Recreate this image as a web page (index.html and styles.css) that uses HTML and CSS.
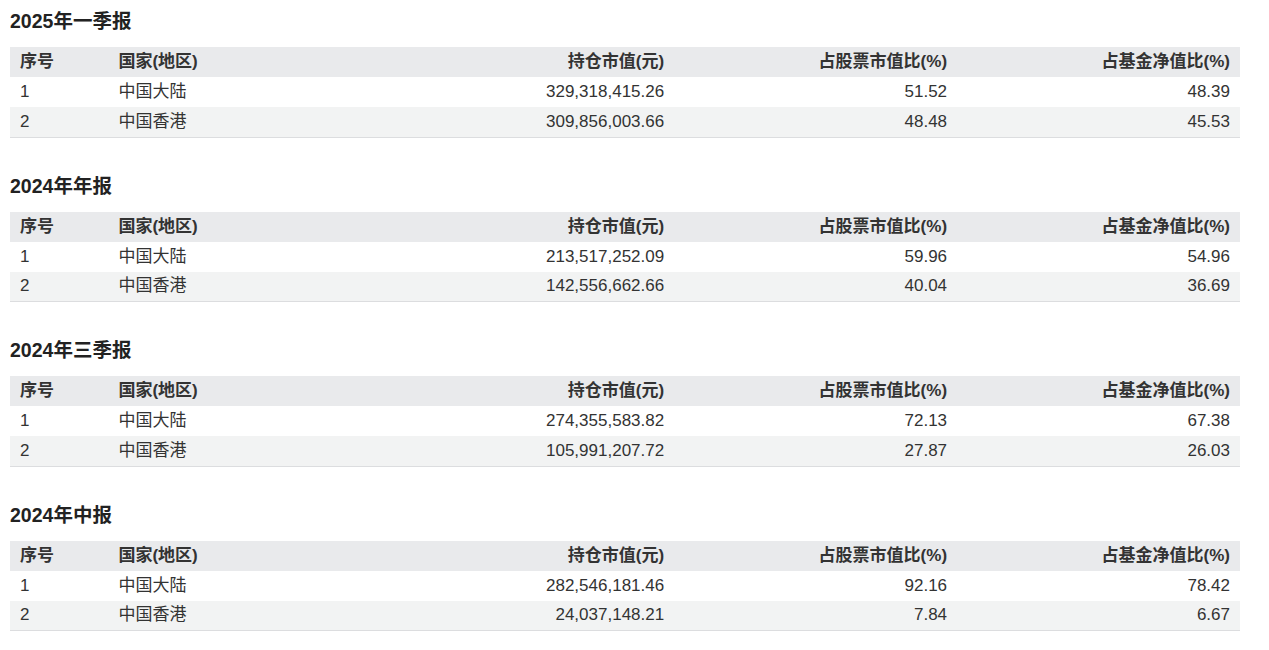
FILE: index.html
```html
<!DOCTYPE html>
<html lang="zh-CN">
<head>
<meta charset="utf-8">
<title>资产配置</title>
<link rel="stylesheet" href="styles.css">
</head>
<body>
<div class="page">
  <section class="report">
    <h3 class="report-title">2025年一季报</h3>
    <table class="grid">
      <colgroup><col class="c-idx"><col class="c-wide"><col class="c-wide"><col class="c-wide"><col class="c-wide"></colgroup>
      <thead><tr><th>序号</th><th>国家(地区)</th><th class="num">持仓市值(元)</th><th class="num">占股票市值比(%)</th><th class="num">占基金净值比(%)</th></tr></thead>
      <tbody>
        <tr><td>1</td><td>中国大陆</td><td class="num">329,318,415.26</td><td class="num">51.52</td><td class="num">48.39</td></tr>
        <tr><td>2</td><td>中国香港</td><td class="num">309,856,003.66</td><td class="num">48.48</td><td class="num">45.53</td></tr>
      </tbody>
    </table>
  </section>
  <section class="report">
    <h3 class="report-title">2024年年报</h3>
    <table class="grid">
      <colgroup><col class="c-idx"><col class="c-wide"><col class="c-wide"><col class="c-wide"><col class="c-wide"></colgroup>
      <thead><tr><th>序号</th><th>国家(地区)</th><th class="num">持仓市值(元)</th><th class="num">占股票市值比(%)</th><th class="num">占基金净值比(%)</th></tr></thead>
      <tbody>
        <tr><td>1</td><td>中国大陆</td><td class="num">213,517,252.09</td><td class="num">59.96</td><td class="num">54.96</td></tr>
        <tr><td>2</td><td>中国香港</td><td class="num">142,556,662.66</td><td class="num">40.04</td><td class="num">36.69</td></tr>
      </tbody>
    </table>
  </section>
  <section class="report">
    <h3 class="report-title">2024年三季报</h3>
    <table class="grid">
      <colgroup><col class="c-idx"><col class="c-wide"><col class="c-wide"><col class="c-wide"><col class="c-wide"></colgroup>
      <thead><tr><th>序号</th><th>国家(地区)</th><th class="num">持仓市值(元)</th><th class="num">占股票市值比(%)</th><th class="num">占基金净值比(%)</th></tr></thead>
      <tbody>
        <tr><td>1</td><td>中国大陆</td><td class="num">274,355,583.82</td><td class="num">72.13</td><td class="num">67.38</td></tr>
        <tr><td>2</td><td>中国香港</td><td class="num">105,991,207.72</td><td class="num">27.87</td><td class="num">26.03</td></tr>
      </tbody>
    </table>
  </section>
  <section class="report">
    <h3 class="report-title">2024年中报</h3>
    <table class="grid">
      <colgroup><col class="c-idx"><col class="c-wide"><col class="c-wide"><col class="c-wide"><col class="c-wide"></colgroup>
      <thead><tr><th>序号</th><th>国家(地区)</th><th class="num">持仓市值(元)</th><th class="num">占股票市值比(%)</th><th class="num">占基金净值比(%)</th></tr></thead>
      <tbody>
        <tr><td>1</td><td>中国大陆</td><td class="num">282,546,181.46</td><td class="num">92.16</td><td class="num">78.42</td></tr>
        <tr><td>2</td><td>中国香港</td><td class="num">24,037,148.21</td><td class="num">7.84</td><td class="num">6.67</td></tr>
      </tbody>
    </table>
  </section>
</div>
</body>
</html>
```

FILE: styles.css
```css
html, body {
  margin: 0;
  padding: 0;
  background: #ffffff;
}

body {
  font-family: "Liberation Sans", "Noto Sans CJK SC", sans-serif;
  color: #333333;
  font-size: 17px;
}

.page {
  width: 1230px;
  padding: 8px 0 0 10px;
}

.report {
  margin-bottom: 35px;
}

.report-title {
  margin: 0 0 12px 0;
  font-size: 19.5px;
  line-height: 27px;
  font-weight: bold;
  color: #222222;
}

.grid {
  width: 100%;
  border-collapse: collapse;
  table-layout: fixed;
  border-bottom: 1px solid #dcdddf;
}

.c-idx { width: 8%; }
.c-wide { width: 23%; }

.grid th,
.grid td {
  height: 30px;
  padding: 0 10px;
  text-align: left;
  vertical-align: middle;
  white-space: nowrap;
  line-height: 22px;
  box-sizing: border-box;
}

.grid th {
  background: #e9eaec;
  font-weight: bold;
  color: #333333;
}

.grid tbody tr:nth-child(2) td {
  background: #f2f3f3;
}

.grid .num {
  text-align: right;
}
```
